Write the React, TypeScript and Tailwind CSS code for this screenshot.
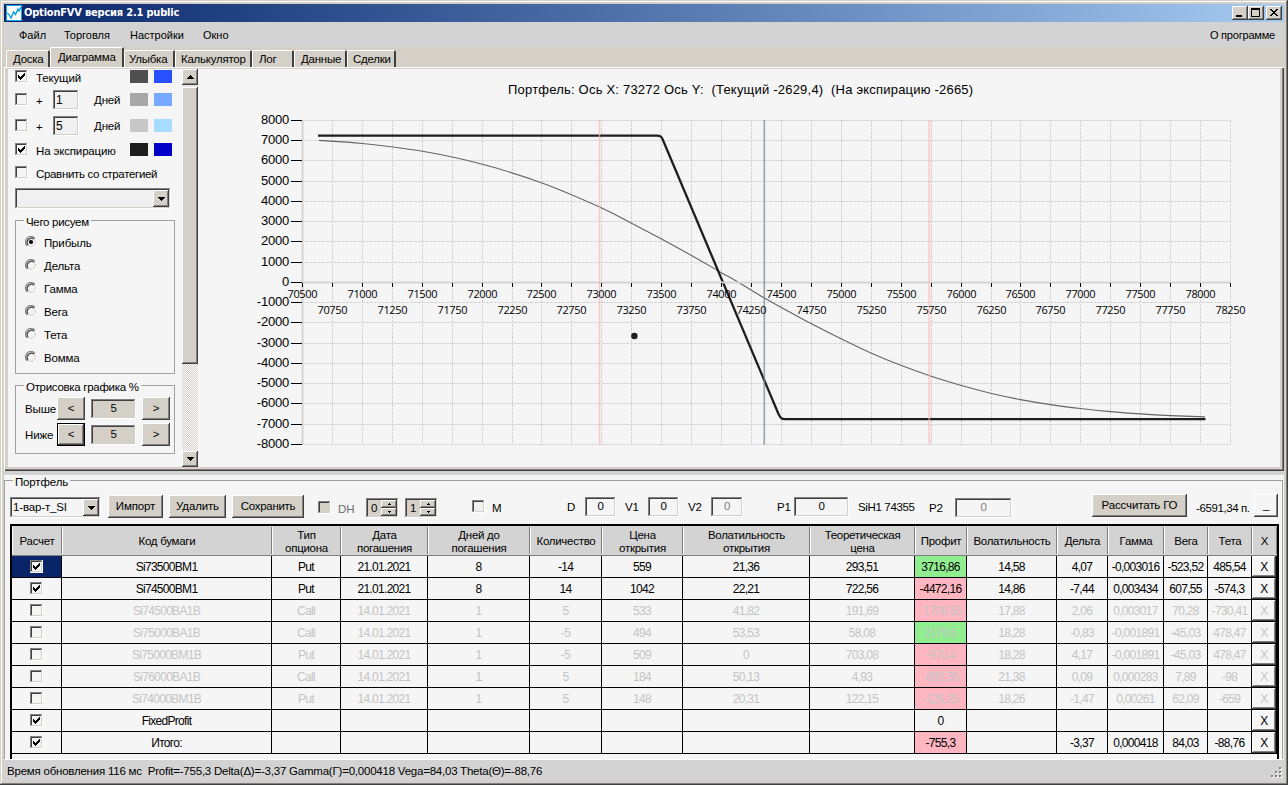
import type { ReactNode } from "react";
import clsx from "clsx";

const raised = "shadow-[inset_-1px_-1px_#404040,inset_1px_1px_#ffffff,inset_-2px_-2px_#808080]";
const sunken = "shadow-[inset_-1px_-1px_#ffffff,inset_1px_1px_#808080,inset_-2px_-2px_#d4d0c8,inset_2px_2px_#404040]";

const tabs = [
  { title: "Доска", width: "w-[44px]", pad: "pl-[6px]" },
  { title: "Диаграмма", width: "w-[74px]", pad: "pl-[7px]", active: true },
  { title: "Улыбка", width: "w-[51px]", pad: "pl-[4px]" },
  { title: "Калькулятор", width: "w-[77px]", pad: "pl-[5px]" },
  { title: "Лог", width: "w-[42px]", pad: "pl-[6px]" },
  { title: "Данные", width: "w-[53px]", pad: "pl-[6px]" },
  { title: "Сделки", width: "w-[49px]", pad: "pl-[5px]" },
];

const columns = [
  { title: "Расчет", width: 50 },
  { title: "Код бумаги", width: 210 },
  { title: "Тип\nопциона", width: 69 },
  { title: "Дата\nпогашения", width: 87 },
  { title: "Дней до\nпогашения", width: 102 },
  { title: "Количество", width: 72 },
  { title: "Цена\nоткрытия", width: 81 },
  { title: "Волатильность\nоткрытия", width: 127 },
  { title: "Теоретическая\nцена", width: 105 },
  { title: "Профит", width: 52 },
  { title: "Волатильность", width: 90 },
  { title: "Дельта", width: 51 },
  { title: "Гамма", width: 56 },
  { title: "Вега", width: 44 },
  { title: "Тета", width: 44 },
  { title: "X", width: 25 },
];

const PROFIT = 8;

interface Row {
  on: boolean;
  color?: "green" | "pink";
  cells: string[];
}

const rows: Row[] = [
  { on: true, color: "green", cells: ["Si73500BM1", "Put", "21.01.2021", "8", "-14", "559", "21,36", "293,51", "3716,86", "14,58", "4,07", "-0,003016", "-523,52", "485,54"] },
  { on: true, color: "pink", cells: ["Si74500BM1", "Put", "21.01.2021", "8", "14", "1042", "22,21", "722,56", "-4472,16", "14,86", "-7,44", "0,003434", "607,55", "-574,3"] },
  { on: false, color: "pink", cells: ["Si74500BA1B", "Call", "14.01.2021", "1", "5", "533", "41,82", "191,69", "-1706,55", "17,88", "2,06", "0,003017", "70,28", "-730,41"] },
  { on: false, color: "green", cells: ["Si75000BA1B", "Call", "14.01.2021", "1", "-5", "494", "53,53", "58,08", "2179,6", "18,28", "-0,83", "-0,001891", "-45,03", "478,47"] },
  { on: false, color: "pink", cells: ["Si75000BM1B", "Put", "14.01.2021", "1", "-5", "509", "0", "703,08", "-970,4", "18,28", "4,17", "-0,001891", "-45,03", "478,47"] },
  { on: false, color: "pink", cells: ["Si76000BA1B", "Call", "14.01.2021", "1", "5", "184", "50,13", "4,93", "-895,35", "21,38", "0,09", "0,000283", "7,89", "-98"] },
  { on: false, color: "pink", cells: ["Si74000BM1B", "Put", "14.01.2021", "1", "5", "148", "20,31", "122,15", "-129,25", "18,26", "-1,47", "0,00261", "62,09", "-659"] },
  { on: true, cells: ["FixedProfit", "", "", "", "", "", "", "", "0", "", "", "", "", ""] },
  { on: true, color: "pink", cells: ["Итого:", "", "", "", "", "", "", "", "-755,3", "", "-3,37", "0,000418", "84,03", "-88,76"] },
];

const Check = ({ checked = false, className }: { checked?: boolean; className?: string }) => (
  <span className={clsx("block w-[13px] h-[13px] shrink-0", sunken, className)}>
    {checked && (
      <svg width="13" height="13" viewBox="0 0 13 13" shapeRendering="crispEdges">
        <path d="M3 5h1v1h1v1h1v-1h1v-1h1v-1h1v-1h1v3h-1v1h-1v1h-1v1h-1v1h-1v-1h-1v-1h-1z" fill="#000" />
      </svg>
    )}
  </span>
);

const Button = ({ children, className }: { children: ReactNode; className?: string }) => (
  <button className={clsx("flex items-center justify-center shrink-0 whitespace-nowrap", raised, className)}>
    {children}
  </button>
);

const Field = ({ children, className }: { children?: ReactNode; className?: string }) => (
  <div className={clsx("flex items-center shrink-0", sunken, className)}>{children}</div>
);

const Label = ({ children, className }: { children: ReactNode; className?: string }) => (
  <span className={clsx("block shrink-0 leading-[14px] whitespace-nowrap", className)}>{children}</span>
);

const Triangle = ({ up = false }: { up?: boolean }) => (
  <svg width="7" height="4" viewBox="0 0 7 4" shapeRendering="crispEdges">
    <path d={up ? "M3 0h1v1h1v1h1v1h1v1h-7v-1h1v-1h1v-1h1z" : "M0 0h7v1h-1v1h-1v1h-1v1h-1v-1h-1v-1h-1v-1h-1z"} />
  </svg>
);

const Select = ({ value, className }: { value?: string; className?: string }) => (
  <div className={clsx("flex items-center shrink-0 p-[2px]", sunken, className)}>
    <span className="grow pl-px whitespace-nowrap">{value}</span>
    <Button className="w-4 h-full bg-[#d4d0c8]">
      <Triangle />
    </Button>
  </div>
);

const Spinner = ({ value, className }: { value: string; className?: string }) => (
  <div className={clsx("flex shrink-0 w-[33px] h-[20px] p-[2px] bg-[#d4d0c8]", sunken, className)}>
    <span className="grow pl-[3px] leading-[17px]">{value}</span>
    <div className="flex flex-col w-[16px]">
      {[true, false].map((up) => (
        <Button key={String(up)} className="w-full h-[8px] bg-[#d4d0c8]">
          <svg width="3" height="2" viewBox="0 0 3 2" shapeRendering="crispEdges">
            <path d={up ? "M1 0h1v1h1v1h-3v-1h1z" : "M0 0h3v1h-1v1h-1v-1h-1z"} />
          </svg>
        </Button>
      ))}
    </div>
  </div>
);

const Radio = ({ checked }: { checked: boolean }) => (
  <svg className="shrink-0" width="12" height="12" viewBox="0 0 12 12">
    <circle cx="6" cy="6" r="5.5" fill="#f2f2f2" stroke="#fff" />
    <circle cx="6" cy="6" r="4.5" fill="none" stroke="#d4d0c8" />
    <path d="M2.1 9.9A5.5 5.5 0 0 1 9.9 2.1" fill="none" stroke="#808080" strokeWidth="1.2" />
    <path d="M2.9 9.1A4.5 4.5 0 0 1 9.1 2.9" fill="none" stroke="#404040" strokeWidth="1.2" />
    {checked && <circle cx="6" cy="6" r="2.1" />}
  </svg>
);

const Swatches = ({ first, second, className }: { first: string; second: string; className?: string }) => (
  <div className={clsx("flex gap-[6px] ml-auto mr-[10px]", className)}>
    <span className={clsx("w-[18px] h-[13px]", first)} />
    <span className={clsx("w-[18px] h-[13px]", second)} />
  </div>
);

const GroupBox = ({ title, children, className }: { title: string; children: ReactNode; className?: string }) => (
  <fieldset className={clsx("w-[160px] ml-[7px] border border-[#a0a0a0]", className)}>
    <legend className="ml-[8px] px-[2px] leading-[16px] h-[12px] whitespace-nowrap tracking-[-0.3px]">{title}</legend>
    {children}
  </fieldset>
);

const TitleBar = () => (
  <div className="flex h-[18px] items-center bg-linear-to-r from-[#0a246a] to-[#a6caf0] pr-[2px]">
    <svg className="ml-[2px]" width="16" height="16" viewBox="0 0 16 16">
      <rect width="16" height="16" fill="#19a3e8" />
      <rect x="1" y="1" width="14" height="14" fill="#fff" />
      <path d="M1 8l2 1.5 2 3.5 2.5-6 2 2.5L12 4l1 2 2-4" fill="none" stroke="#19a3e8" strokeWidth="1.5" />
    </svg>
    <span className="ml-[2px] font-['DejaVu_Sans_Condensed','DejaVu_Sans',sans-serif] font-bold text-[11px] text-white tracking-[-0.2px]">
      OptionFVV версия 2.1 public
    </span>
    <div className="flex ml-auto">
      <Button className="w-4 h-[14px] bg-[#d4d0c8]">
        <svg width="16" height="14" shapeRendering="crispEdges"><path d="M4 9h6v2h-6z" /></svg>
      </Button>
      <Button className="w-4 h-[14px] mr-[2px] bg-[#d4d0c8]">
        <svg width="16" height="14" shapeRendering="crispEdges"><path d="M3 2h9v9h-9zM4 4v6h7v-6z" fillRule="evenodd" /></svg>
      </Button>
      <Button className="w-4 h-[14px] bg-[#d4d0c8]">
        <svg width="16" height="14" shapeRendering="crispEdges">
          <path d="M4 3h2v1h1v1h2v-1h1v-1h2v1h-1v1h-1v1h-1v1h1v1h1v1h1v1h-2v-1h-1v-1h-2v1h-1v1h-2v-1h1v-1h1v-1h1v-1h-1v-1h-1v-1h-1z" />
        </svg>
      </Button>
    </div>
  </div>
);

const MenuBar = () => (
  <div className="flex h-[25px] items-center bg-[#d3d3d3] text-[11px] tracking-normal pl-[15px] pr-[9px]">
    <Label className="w-[45px]">Файл</Label>
    <Label className="w-[66px]">Торговля</Label>
    <Label className="w-[73px]">Настройки</Label>
    <Label>Окно</Label>
    <Label className="ml-auto tracking-[-0.2px]">О программе</Label>
  </div>
);

const TabStrip = () => (
  <div className="flex h-[20px] items-end pl-[2px] bg-[#d4d0c8] tracking-[-0.25px]">
    {tabs.map((tab) => (
      <div
        key={tab.title}
        className={clsx(
          "rounded-t-[2px] border-t border-l border-white border-r-[#404040] border-r-2 whitespace-nowrap",
          tab.width,
          tab.pad,
          tab.active ? "h-[20px] leading-[18px]" : "h-[17px] leading-[16px]"
        )}
      >
        {tab.title}
      </div>
    ))}
  </div>
);

const plots = ["Прибыль", "Дельта", "Гамма", "Вега", "Тета", "Вомма"];

const SettingsPanel = () => (
  <div className="w-[174px] shrink-0 overflow-hidden">
    <div className="flex pt-px h-[21px] pl-[7px]">
      <Check checked />
      <Label className="ml-[8px] mt-px">Текущий</Label>
      <Swatches first="bg-[#505050]" second="bg-[#2850ff]" />
    </div>
    {[
      { days: "1", first: "bg-[#a8a8a8]", second: "bg-[#78a8ff]" },
      { days: "5", first: "bg-[#c8c8c8]", second: "bg-[#a8dcff]" },
    ].map((item) => (
      <div key={item.days} className="flex h-[26px] pl-[7px]">
        <Check className="mt-[3px]" />
        <Label className="w-[17px] ml-[8px] mt-[4px]">+</Label>
        <Field className="w-[26px] h-[20px] pl-[3px] bg-[#f0f0f0] text-[12px]">{item.days}</Field>
        <Label className="ml-[15px] mt-[3px]">Дней</Label>
        <Swatches className="mt-[3px]" first={item.first} second={item.second} />
      </div>
    ))}
    <div className="flex h-[24px] pt-px pl-[7px]">
      <Check checked />
      <Label className="ml-[8px] mt-px">На экспирацию</Label>
      <Swatches first="bg-[#1e1e1e]" second="bg-[#0000c8]" />
    </div>
    <div className="flex h-[22px] pl-[7px]">
      <Check />
      <Label className="ml-[8px] mt-px tracking-[-0.33px]">Сравнить со стратегией</Label>
    </div>
    <Select className="ml-[7px] w-[156px] h-[21px] bg-[#f0f0f0]" />
    <GroupBox title="Чего рисуем" className="mt-[5px] h-[160px]">
      <div className="flex flex-col pl-[9px] pt-[10px]">
        {plots.map((plot, i) => (
          <div key={plot} className="flex h-[23px]">
            <Radio checked={i === 0} />
            <Label className="ml-[7px]">{plot}</Label>
          </div>
        ))}
      </div>
    </GroupBox>
    <GroupBox title="Отрисовка графика %" className="mt-[5px] h-[75px]">
      <div className="pt-[6px]">
        {["Выше", "Ниже"].map((side, i) => (
          <div key={side} className="flex h-[26px] pl-[9px]">
            <Label className="w-[32px] mt-[5px]">{side}</Label>
            <Button className={clsx("w-[28px] h-[23px] bg-[#d4d0c8]", i === 1 && "border border-black")}>&lt;</Button>
            <Field className="w-[45px] h-[20px] mt-[2px] ml-[6px] justify-center bg-[#d4d0c8]">5</Field>
            <Button className="w-[28px] h-[23px] ml-[6px] bg-[#d4d0c8]">&gt;</Button>
          </div>
        ))}
      </div>
    </GroupBox>
  </div>
);

const ScrollBar = () => (
  <div className="flex flex-col w-[16px] shrink-0 bg-[repeating-conic-gradient(#ffffff_0_25%,#d4d0c8_0_50%)] bg-size-[2px_2px]">
    <Button className="w-4 h-[16px] bg-[#d4d0c8]"><Triangle up /></Button>
    <Button className="w-4 h-[277px] mt-[2px] bg-[#d4d0c8]">{null}</Button>
    <Button className="w-4 h-[16px] mt-auto bg-[#d4d0c8]"><Triangle /></Button>
  </div>
);

const currentLine: [number, number][] = [
  [319, 140.4], [362.5, 143.5], [422.5, 151.3], [482.5, 164.3], [542, 183], [599.5, 207], [631.5, 223.2],
  [661.5, 239], [691.5, 255.5], [721.5, 272.7], [736.7, 281.3], [764, 297.7], [781.5, 307.5], [811.5, 323.8],
  [841.5, 339], [871.5, 353.2], [901.5, 365.6], [929, 375.5], [960.5, 385.3], [990.5, 393.2], [1020.5, 399.6],
  [1050.5, 404.6], [1080.5, 408.5], [1110.5, 411.6], [1140.5, 413.9], [1170.5, 415.6], [1205, 416.9],
];

// Catmull-Rom spline through the points, as cubic segments
const smooth = (pts: [number, number][]) =>
  pts.slice(1).reduce((d, p, i) => {
    const a = pts[Math.max(i - 1, 0)];
    const b = pts[i];
    const c = pts[Math.min(i + 2, pts.length - 1)];
    return `${d}C${b[0] + (p[0] - a[0]) / 6} ${b[1] + (p[1] - a[1]) / 6} ${p[0] - (c[0] - b[0]) / 6} ${p[1] - (c[1] - b[1]) / 6} ${p[0]} ${p[1]}`;
  }, `M${pts[0][0]} ${pts[0][1]}`);

const xTicks = Array.from({ length: 32 }, (_, i) => ({ value: 70500 + i * 250, x: Math.round(302 + (i * 928) / 31) + 0.5 }));
const yTicks = Array.from({ length: 17 }, (_, i) => ({ value: 8000 - i * 1000, y: Math.round(119.9 + i * 20.25) + 0.5 }));

const Chart = () => (
  <svg className="shrink-0" width="1082" height="398" viewBox="198 69 1082 398">
    <text x="508" y="94" textLength="465" className="text-[13px] whitespace-pre">
      {"Портфель: Ось X: 73272 Ось Y:  (Текущий -2629,4)  (На экспирацию -2665)"}
    </text>
    <g stroke="#d3d3d3" strokeDasharray="3 1">
      {xTicks.map((t) => <path key={t.value} d={`M${t.x} 120V445`} />)}
      {yTicks.map((t) => <path key={t.value} d={`M302 ${t.y}H1230`} />)}
    </g>
    <path d="M302.5 120V445" stroke="#d3d3d3" strokeWidth="2" />
    <path d={smooth(currentLine)} fill="none" stroke="#646464" strokeWidth="1.1" />
    <path d="M318 135.7H657C660 135.7 661 136 662.5 139L778.5 414C780.5 418 781.5 419.2 785 419.2H1205.5" fill="none" stroke="#1e1e1e" strokeWidth="2.3" />
    <path d="M302 282.5H1230" stroke="#d3d3d3" strokeWidth="2" />
    <path d="M599.5 120V445" stroke="#ffb6c1" strokeOpacity="0.75" strokeWidth="1.4" />
    <path d="M929.2 120V445" stroke="#ffb6c1" strokeOpacity="0.6" strokeWidth="2" />
    <path d="M764.3 120V445" stroke="#708090" strokeOpacity="0.7" strokeWidth="1.6" />
    <g shapeRendering="crispEdges" stroke="#000">
      {xTicks.map((t) => <path key={t.value} d={`M${t.x} 283V287`} />)}
      {yTicks.map((t) => <path key={t.value} d={`M291 ${t.y}H302`} />)}
    </g>
    {yTicks.map((t) => (
      <text key={t.value} x="289" y={t.y + 3.5} textAnchor="end" className="text-[13px] tracking-[-0.2px]">{t.value}</text>
    ))}
    <g className="font-['Open_Sans',sans-serif] text-[11px] tracking-normal">
      {xTicks.map((t, i) => (
        <text key={t.value} x={t.x} y={i % 2 ? 314 : 298} textAnchor="middle" textLength="30">{t.value}</text>
      ))}
    </g>
    <circle cx="634.4" cy="336" r="3.2" fill="#1e1e1e" />
  </svg>
);

const Toolbar = () => (
  <div className="flex items-start pl-[5px] h-[29px]">
    <Select value="1-вар-т_SI" className="w-[91px] h-[21px] mt-[2px]" />
    <Button className="w-[55px] h-[23px] ml-[7px] bg-[#d4d0c8]">Импорт</Button>
    <Button className="w-[57px] h-[23px] ml-[6px] bg-[#d4d0c8]">Удалить</Button>
    <Button className="w-[72px] h-[23px] ml-[6px] bg-[#d4d0c8] tracking-[-0.3px]">Сохранить</Button>
    <Check className="ml-[14px] mt-[6px] bg-[#d4d0c8]" />
    <Label className="w-[28px] ml-[7px] mt-[7px] text-[#6d6d6d]">DH</Label>
    <Spinner value="0" className="mt-[3px]" />
    <Spinner value="1" className="mt-[3px] ml-[6px]" />
    <Check className="ml-[34px] mt-[5px] bg-[#f0f0f0]" />
    <Label className="w-[75px] ml-[7px] mt-[6px]">M</Label>
    <Label className="w-[18px] mt-[5px]">D</Label>
    <Field className="w-[31px] h-[20px] mt-[2px] justify-center">0</Field>
    <Label className="w-[23px] ml-[9px] mt-[5px]">V1</Label>
    <Field className="w-[31px] h-[20px] mt-[2px] justify-center">0</Field>
    <Label className="w-[23px] ml-[9px] mt-[5px]">V2</Label>
    <Field className="w-[32px] h-[20px] mt-[2px] justify-center text-[#808080]">0</Field>
    <Label className="w-[17px] ml-[34px] mt-[5px]">P1</Label>
    <Field className="w-[55px] h-[20px] mt-[2px] justify-center">0</Field>
    <Label className="w-[71px] ml-[9px] mt-[5px] tracking-[-0.35px]">SiH1 74355</Label>
    <Label className="w-[26px] mt-[6px]">P2</Label>
    <Field className="w-[57px] h-[20px] mt-[3px] justify-center text-[#808080]">0</Field>
    <Button className="w-[95px] h-[23px] ml-[80px] -mt-px bg-[#d4d0c8]">Рассчитать ГО</Button>
    <Label className="w-[58px] ml-[9px] mt-[6px] tracking-[-0.4px]">-6591,34 п.</Label>
    <Button className="w-[24px] h-[23px] -mt-px">_</Button>
  </div>
);

const Table = () => (
  <div className="ml-[5px] w-[1269px] h-[235px] border-t-2 border-l-2 border-r-2 border-black">
    <div className="flex h-[30px] bg-[#d3d3d3] border-b border-[#808080] tracking-[-0.28px]">
      {columns.map((col, i) => (
        <div key={i} className="shrink-0 py-px" style={{ width: col.width }}>
          <div className="flex h-full items-center justify-center pt-[2px] text-center leading-[13px] whitespace-pre border-r border-[#808080] border-l border-l-white">
            {col.title}
          </div>
        </div>
      ))}
    </div>
    {rows.map((row, r) => (
      <div key={r} className={clsx("flex h-[22px] text-[12px] tracking-[-0.7px]", !row.on && "text-[#c4c4c4]")}>
        <div className={clsx("flex w-[50px] items-center justify-center pr-px border-r border-b border-black", r === 0 && "bg-[#0a246a]")}>
          <Check checked={row.on} className={clsx(r === 0 && "bg-[#f5f5f5]")} />
        </div>
        {row.cells.map((cell, i) => (
          <div
            key={i}
            className={clsx(
              "flex shrink-0 items-center justify-center border-r border-b border-black whitespace-nowrap",
              i === PROFIT && row.color === "green" && "bg-[#90ee90]",
              i === PROFIT && row.color === "pink" && "bg-[#ffb6c1]"
            )}
            style={{ width: columns[i + 1].width }}
          >
            {cell}
          </div>
        ))}
        <div className="w-[25px] border-r border-b border-black">
          <Button className="w-full h-full">X</Button>
        </div>
      </div>
    ))}
  </div>
);

const StatusBar = () => (
  <div className="flex h-[22px] items-center justify-between pl-[3px] border-t border-white bg-[#d3d3d3] tracking-[-0.22px]">
    <Label className="whitespace-pre">
      {"Время обновления 116 мс  Profit=-755,3 Delta(Δ)=-3,37 Gamma(Γ)=0,000418 Vega=84,03 Theta(Θ)=-88,76"}
    </Label>
    <svg className="self-end mr-[1px] mb-[2px]" width="12" height="12" shapeRendering="crispEdges">
      <path d="M9 1h2v2h-2zM5 5h2v2h-2zM9 5h2v2h-2zM1 9h2v2h-2zM5 9h2v2h-2zM9 9h2v2h-2z" fill="#fff" />
      <path d="M8 0h2v2h-2zM4 4h2v2h-2zM8 4h2v2h-2zM0 8h2v2h-2zM4 8h2v2h-2zM8 8h2v2h-2z" fill="#808080" />
    </svg>
  </div>
);

export default function App() {
  return (
    <div className="w-[1288px] h-[785px] overflow-hidden p-[4px] bg-[#d4d0c8] text-black text-[11.5px] tracking-[-0.15px] font-['Liberation_Sans',Arial,sans-serif] shadow-[inset_-1px_-1px_#404040,inset_1px_1px_#d4d0c8,inset_-2px_-2px_#808080,inset_2px_2px_#ffffff]">
      <TitleBar />
      <MenuBar />
      <TabStrip />
      <div className="flex h-[404px] border-t border-l border-white shadow-[inset_-1px_-1px_#404040,inset_-2px_-2px_#808080] pt-px pl-[3px]">
        <div className="flex w-[1272px] h-[398px] bg-[#f5f5f5]">
          <SettingsPanel />
          <ScrollBar />
          <Chart />
        </div>
      </div>
      <div className="h-[4px] bg-[#d3d3d3]" />
      <div className="h-[284px] bg-[#f5f5f5] overflow-hidden">
        <fieldset className="h-[290px] w-[1279px] border border-[#a0a0a0]">
          <legend className="ml-[8px] px-[2px] h-[10px] leading-[14px]">Портфель</legend>
          <div className="pt-[10px]">
            <Toolbar />
            <Table />
          </div>
        </fieldset>
      </div>
      <StatusBar />
    </div>
  );
}
